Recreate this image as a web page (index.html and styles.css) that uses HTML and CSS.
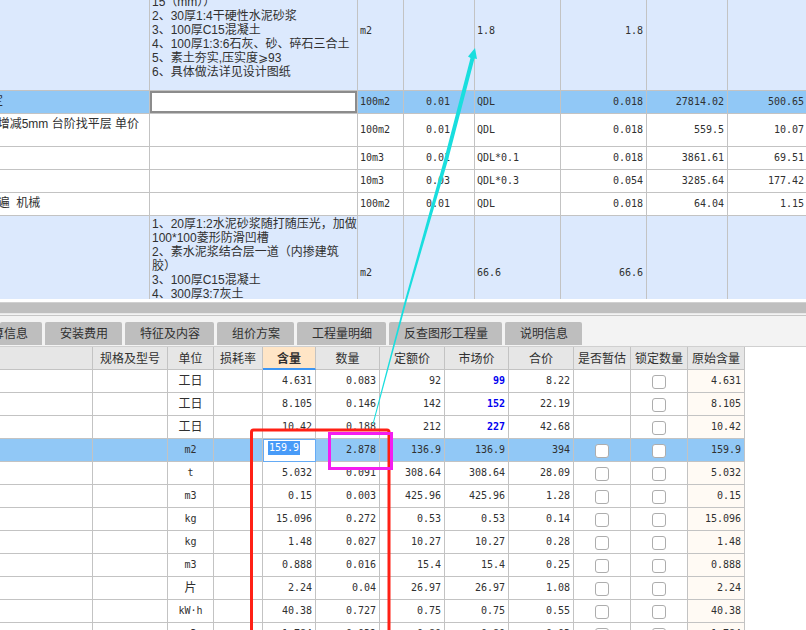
FILE: index.html
```
<!DOCTYPE html>
<html lang="zh-CN">
<head>
<meta charset="utf-8">
<title>工程量</title>
<link rel="stylesheet" href="styles.css">
</head>
<body>
<main class="app">
<section class="upper">
<table class="grid items">
<colgroup><col class="c-name"><col class="c-desc"><col class="c-unit"><col class="c-rate"><col class="c-expr"><col class="c-qty"><col class="c-price"><col class="c-total"></colgroup>
<tbody>
<tr class="group first"><td></td><td class="desc"><p>15（mm））
2、30厚1:4干硬性水泥砂浆
3、100厚C15混凝土
4、100厚1:3:6石灰、砂、碎石三合土
5、素土夯实,压实度⩾93
6、具体做法详见设计图纸</p></td><td>m2</td><td></td><td>1.8</td><td class="num">1.8</td><td></td><td></td></tr>
<tr class="selected"><td class="name">定</td><td class="field"><input type="text" class="desc-input" aria-label="项目特征"></td><td>100m2</td><td class="num rate">0.01</td><td>QDL</td><td class="num">0.018</td><td class="num">27814.02</td><td class="num">500.65</td></tr>
<tr class="tall"><td class="name">  增减5mm 台阶找平层 单价</td><td></td><td>100m2</td><td class="num rate">0.01</td><td>QDL</td><td class="num">0.018</td><td class="num">559.5</td><td class="num">10.07</td></tr>
<tr><td></td><td></td><td>10m3</td><td class="num rate">0.01</td><td>QDL*0.1</td><td class="num">0.018</td><td class="num">3861.61</td><td class="num">69.51</td></tr>
<tr><td></td><td></td><td>10m3</td><td class="num rate">0.03</td><td>QDL*0.3</td><td class="num">0.054</td><td class="num">3285.64</td><td class="num">177.42</td></tr>
<tr><td class="name">  遍  机械</td><td></td><td>100m2</td><td class="num rate">0.01</td><td>QDL</td><td class="num">0.018</td><td class="num">64.04</td><td class="num">1.15</td></tr>
<tr class="group last"><td></td><td class="desc"><p>1、20厚1:2水泥砂浆随打随压光，加做
100*100菱形防滑凹槽
2、素水泥浆结合层一道（内掺建筑
胶）
3、100厚C15混凝土
4、300厚3:7灰土</p></td><td>m2</td><td></td><td>66.6</td><td class="num">66.6</td><td></td><td></td></tr>
</tbody>
</table>
</section>
<div class="splitter"></div>
<nav class="tabs">
<button type="button" class="tab cut">算信息</button>
<button type="button" class="tab">安装费用</button>
<button type="button" class="tab">特征及内容</button>
<button type="button" class="tab">组价方案</button>
<button type="button" class="tab">工程量明细</button>
<button type="button" class="tab">反查图形工程量</button>
<button type="button" class="tab">说明信息</button>
</nav>
<section class="lower">
<table class="grid parts">
<colgroup><col class="p-name"><col class="p-spec"><col class="p-unit"><col class="p-loss"><col class="p-content"><col class="p-qty"><col class="p-price"><col class="p-market"><col class="p-price"><col class="p-check"><col class="p-check"><col class="p-check"></colgroup>
<thead><tr><th></th><th>规格及型号</th><th>单位</th><th>损耗率</th><th class="active">含量</th><th>数量</th><th>定额价</th><th>市场价</th><th>合价</th><th>是否暂估</th><th>锁定数量</th><th>原始含量</th></tr></thead>
<tbody>
<tr><td></td><td></td><td class="unit han">工日</td><td></td><td>4.631</td><td>0.083</td><td>92</td><td class="hot">99</td><td>8.22</td><td></td><td class="check"><input type="checkbox" aria-label="锁定数量"></td><td class="origin">4.631</td></tr>
<tr><td></td><td></td><td class="unit han">工日</td><td></td><td>8.105</td><td>0.146</td><td>142</td><td class="hot">152</td><td>22.19</td><td></td><td class="check"><input type="checkbox" aria-label="锁定数量"></td><td class="origin">8.105</td></tr>
<tr><td></td><td></td><td class="unit han">工日</td><td></td><td>10.42</td><td>0.188</td><td>212</td><td class="hot">227</td><td>42.68</td><td></td><td class="check"><input type="checkbox" aria-label="锁定数量"></td><td class="origin">10.42</td></tr>
<tr class="selected"><td></td><td></td><td class="unit">m2</td><td></td><td class="editing"><input type="text" class="edit" value="159.9" aria-label="含量"></td><td>2.878</td><td>136.9</td><td>136.9</td><td>394</td><td class="check"><input type="checkbox" aria-label="是否暂估"></td><td class="check"><input type="checkbox" aria-label="锁定数量"></td><td class="origin">159.9</td></tr>
<tr><td></td><td></td><td class="unit">t</td><td></td><td>5.032</td><td>0.091</td><td>308.64</td><td>308.64</td><td>28.09</td><td class="check"><input type="checkbox" aria-label="是否暂估"></td><td class="check"><input type="checkbox" aria-label="锁定数量"></td><td class="origin">5.032</td></tr>
<tr><td></td><td></td><td class="unit">m3</td><td></td><td>0.15</td><td>0.003</td><td>425.96</td><td>425.96</td><td>1.28</td><td class="check"><input type="checkbox" aria-label="是否暂估"></td><td class="check"><input type="checkbox" aria-label="锁定数量"></td><td class="origin">0.15</td></tr>
<tr><td></td><td></td><td class="unit">kg</td><td></td><td>15.096</td><td>0.272</td><td>0.53</td><td>0.53</td><td>0.14</td><td class="check"><input type="checkbox" aria-label="是否暂估"></td><td class="check"><input type="checkbox" aria-label="锁定数量"></td><td class="origin">15.096</td></tr>
<tr><td></td><td></td><td class="unit">kg</td><td></td><td>1.48</td><td>0.027</td><td>10.27</td><td>10.27</td><td>0.28</td><td class="check"><input type="checkbox" aria-label="是否暂估"></td><td class="check"><input type="checkbox" aria-label="锁定数量"></td><td class="origin">1.48</td></tr>
<tr><td></td><td></td><td class="unit">m3</td><td></td><td>0.888</td><td>0.016</td><td>15.4</td><td>15.4</td><td>0.25</td><td class="check"><input type="checkbox" aria-label="是否暂估"></td><td class="check"><input type="checkbox" aria-label="锁定数量"></td><td class="origin">0.888</td></tr>
<tr><td></td><td></td><td class="unit han">片</td><td></td><td>2.24</td><td>0.04</td><td>26.97</td><td>26.97</td><td>1.08</td><td class="check"><input type="checkbox" aria-label="是否暂估"></td><td class="check"><input type="checkbox" aria-label="锁定数量"></td><td class="origin">2.24</td></tr>
<tr><td></td><td></td><td class="unit">kW·h</td><td></td><td>40.38</td><td>0.727</td><td>0.75</td><td>0.75</td><td>0.55</td><td class="check"><input type="checkbox" aria-label="是否暂估"></td><td class="check"><input type="checkbox" aria-label="锁定数量"></td><td class="origin">40.38</td></tr>
<tr><td></td><td></td><td class="unit">m3</td><td></td><td>1.784</td><td>0.032</td><td>0.80</td><td>0.80</td><td>0.03</td><td class="check"><input type="checkbox" aria-label="是否暂估"></td><td class="check"><input type="checkbox" aria-label="锁定数量"></td><td class="origin">1.784</td></tr>
</tbody>
</table>
</section>
<svg class="marks" width="806" height="630" viewBox="0 0 806 630" aria-hidden="true">
<path d="M251.5 640V432q0-2 2-2H387q2 0 2 2V640" fill="none" stroke="#ff2015" stroke-width="3"/>
<rect x="329.5" y="433.5" width="62" height="35" fill="none" stroke="#f41df0" stroke-width="3"/>
<path d="M372.5 424L405 300L444 160L470.500 58L468 56.500L475 48L477 59L474.500 58.500L448 160L407 300L373.500 424Z" fill="#19dede"/>
</svg>
</main>
</body>
</html>
```
FILE: styles.css
```
* { box-sizing: border-box; }
body {
  margin: 0;
  background: #fff;
  color: #303030;
  font: 12px/14px "Liberation Sans", "Noto Sans CJK SC", "DejaVu Sans", sans-serif;
}
.app {
  position: relative;
  display: flex;
  flex-direction: column;
  height: 100vh;
  overflow: hidden;
}
.upper { flex: 0 0 299px; overflow: hidden; }
.lower { flex: 1; min-height: 0; overflow: hidden; }
.grid { border-collapse: separate; border-spacing: 0; table-layout: fixed; }
.grid td, .grid th {
  height: 23px;
  padding: 0 3px;
  border: solid #c3c3c3;
  border-width: 0 1px 1px 0;
  white-space: nowrap;
  overflow: hidden;
}
.grid td { font-family: "DejaVu Sans Mono", "Noto Sans CJK SC", monospace; font-size: 10px; }

/* The upper list is scrolled a little down and to the right */
.items { width: calc(100% + 14px); margin: -29px 0 0 -12px; }
.items td { padding: 0 3px 0 2px; }
.c-name { width: 162px; }
.c-desc { width: 208px; }
.c-unit { width: 46px; }
.c-rate { width: 71px; }
.c-expr { width: 86px; }
.c-qty { width: 86px; }
.c-price { width: 81px; }
.items .num { text-align: right; }
.items .rate { padding-right: 24px; }
.group td { background: #dce9fd; }
.items .first td { height: 120px; }
.items .last td { height: 114px; }
.items .tall td { height: 33px; }
.items .name, .items .desc {
  font-family: "Liberation Sans", "Noto Sans CJK SC", "DejaVu Sans", sans-serif;
  font-size: 12px;
  white-space: pre;
}
.items .name { padding: 3px 0 0 3px; vertical-align: top; }
.desc p { margin: 0; }
.items .first .desc { vertical-align: bottom; padding-bottom: 11px; }
.items .last .desc { vertical-align: top; padding: 1px 0 0 2px; }
.selected td, .parts .selected .origin { background: #91c8f6; }
.items .field { padding: 0; }
.desc-input {
  display: block;
  width: 100%;
  height: 22px;
  border: 2px solid #8c8c8c;
  border-radius: 0;
  background: #fff;
}

.splitter {
  flex: 0 0 17px;
  background: linear-gradient(#fff 0 3px, #d0d0d0 3px 4px, #bfbfbf 4px 14px, #e8e8e8 14px 15px, #f3f3f3 15px 16px, #c6c6c6 16px);
}
.tabs {
  display: flex;
  flex: 0 0 31px;
  gap: 3px;
  padding: 6px 0 1px;
  background: #f3f3f3;
  border-bottom: 1px solid #d0d0d0;
}
.tab {
  flex: none;
  padding: 1px 14px 0;
  border: 0;
  border-radius: 2px 2px 0 0;
  background: #bebebe;
  color: #303030;
  font: inherit;
}
.tab + .tab { padding-left: 15px; }
.cut { width: 42px; padding: 1px 14px 0 0; direction: rtl; white-space: nowrap; overflow: hidden; }

.parts { width: 744px; }
.parts th { background: #e6e6e6; padding: 2px 0 0; font-weight: 400; text-align: center; }
.parts .active { background: #ffe5c6; border-bottom: 2px solid #3d95f2; font-weight: 700; }
.parts td { text-align: right; }
.parts .unit { text-align: center; }
.parts .han { font-size: 12px; }
.p-name { width: 93px; }
.p-spec { width: 75px; }
.p-unit { width: 46px; }
.p-loss { width: 49px; }
.p-content { width: 53px; }
.p-qty { width: 64px; }
.p-price { width: 65px; }
.p-market { width: 64px; }
.p-check { width: 57px; }
.parts .hot { color: #0000f0; font-weight: 700; }
.parts .check { padding: 1px 0 0; text-align: center; }
.check input {
  appearance: none;
  display: block;
  width: 14px;
  height: 14px;
  margin: 0 auto;
  border: 1px solid #adadad;
  border-radius: 3px;
  background: #fff;
}
.origin { background: #fffaf4; }
.parts .editing {
  padding: 1px 4px;
  border: 1px solid #65abf5;
  background: #fff;
  text-align: left;
  vertical-align: top;
}
.edit {
  display: block;
  width: 32px;
  height: 14px;
  padding: 0 1px;
  border: 0;
  background: #489bf8;
  color: #fff;
  font: inherit;
}
.marks { position: absolute; top: 0; left: 0; pointer-events: none; }
```
